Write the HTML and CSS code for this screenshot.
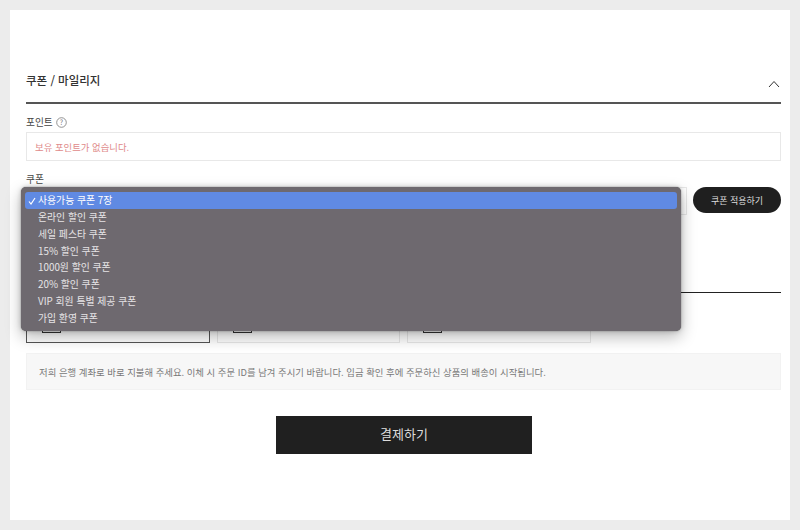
FILE: index.html
```html
<!DOCTYPE html>
<html lang="ko">
  <head>
    <meta charset="UTF-8" />
    <meta name="viewport" content="width=device-width, initial-scale=1.0" />
    <title>결제하기</title>
    <link rel="stylesheet" href="styles.css">
  </head>
  <body>
    <main class="panel">
      <!-- 쿠폰 / 마일리지 -->
      <div class="section-head">
        <h2>쿠폰 / 마일리지</h2>
        <svg class="chevron" width="12" height="8" viewBox="0 0 12 8">
          <path d="M1 7 L6 1.5 L11 7" fill="none" stroke="#333" stroke-width="1" />
        </svg>
      </div>

      <div class="field-label point-label">
        포인트
        <svg width="11" height="11" viewBox="0 0 11 11">
          <circle cx="5.5" cy="5.5" r="4.8" fill="none" stroke="#777" stroke-width="0.8" />
          <text x="5.5" y="8" text-anchor="middle" font-size="7" fill="#777">?</text>
        </svg>
      </div>
      <div class="point-box">보유 포인트가 없습니다.</div>

      <div class="field-label coupon-label">쿠폰</div>
      <div class="coupon-row">
        <div class="coupon-select"></div>
        <button class="coupon-btn">쿠폰 적용하기</button>
      </div>

      <!-- 결제 수단 -->
      <div class="pay-rule"></div>
      <div class="pay-methods">
        <div class="pay-card pay-card-on"><span class="pay-icon"></span></div>
        <div class="pay-card"><span class="pay-icon"></span></div>
        <div class="pay-card pay-card-last"><span class="pay-icon"></span></div>
      </div>
      <div class="pay-info">저희 은행 계좌로 바로 지불해 주세요. 이체 시 주문 ID를 남겨 주시기 바랍니다. 입금 확인 후에 주문하신 상품의 배송이 시작됩니다.</div>
      <button class="pay-btn">결제하기</button>

      <!-- 열린 쿠폰 목록 -->
      <ul class="coupon-menu">
        <li class="selected">
          <svg class="check" width="8" height="8" viewBox="0 0 8 8">
            <path d="M1 4.5 L3 7 L7 1" fill="none" stroke="#fff" stroke-width="1.2" />
          </svg>
          사용가능 쿠폰 7장
        </li>
        <li>온라인 할인 쿠폰</li>
        <li>세일 페스타 쿠폰</li>
        <li>15% 할인 쿠폰</li>
        <li>1000원 할인 쿠폰</li>
        <li>20% 할인 쿠폰</li>
        <li>VIP 회원 특별 제공 쿠폰</li>
        <li>가입 환영 쿠폰</li>
      </ul>
    </main>
  </body>
</html>
```

FILE: styles.css
```css
* {
  box-sizing: border-box;
}
body {
  margin: 0;
  padding: 10px;
  height: 530px;
  overflow: hidden;
  background-color: #ececec;
  font-family: "Noto Sans CJK KR", "Liberation Sans", sans-serif;
  color: #222;
}
.panel {
  position: relative;
  height: 510px;
  padding: 0 9px 0 16px;
  background-color: #fff;
}
.section-head {
  display: flex;
  justify-content: space-between;
  align-items: center;
  height: 94px;
  padding-top: 58px;
  padding-bottom: 10px;
  border-bottom: 2px solid #555;
}
.section-head h2 {
  margin: 0;
  font-size: 11.5px;
  font-weight: 500;
  color: #333;
}
.chevron {
  margin-top: 8px;
  margin-right: 1px;
}
.field-label {
  font-size: 9.7px;
  line-height: 14px;
  color: #444;
}
.point-label {
  display: flex;
  align-items: center;
  gap: 3px;
  margin-top: 11px;
}
.point-box {
  display: flex;
  align-items: center;
  height: 29px;
  margin-top: 3px;
  padding-left: 8px;
  border: 1px solid #e8e8e8;
  font-size: 9.4px;
  color: #e08a8a;
}
.coupon-label {
  margin-top: 11px;
  margin-bottom: 1px;
}
.coupon-row {
  display: flex;
  justify-content: space-between;
  align-items: center;
  height: 28px;
}
.coupon-select {
  width: 661px;
  height: 28px;
  border: 1px solid #e8e8e8;
}
.coupon-btn {
  width: 88px;
  height: 26px;
  margin-bottom: 2px;
  padding: 0;
  border: none;
  border-radius: 13px;
  background-color: #1f1f1f;
  color: #ddd;
  font-family: inherit;
  font-size: 9px;
}
.pay-rule {
  height: 1px;
  margin-top: 77px;
  background-color: #222;
}
.pay-methods {
  display: flex;
  gap: 7px;
  margin-top: 9px;
}
.pay-card {
  display: flex;
  width: 183px;
  height: 41px;
  padding-left: 15px;
  border: 1px solid #e8e8e8;
}
.pay-card-on {
  width: 184px;
  border-color: #555;
}
.pay-card-last {
  width: 184px;
}
.pay-icon {
  width: 19px;
  height: 30px;
  border: 1px solid #333;
}
.pay-info {
  display: flex;
  align-items: center;
  height: 37px;
  margin-top: 10px;
  padding-left: 12px;
  border: 1px solid #f2f2f2;
  background-color: #f7f7f7;
  font-size: 9.39px;
  color: #777;
}
.pay-btn {
  display: block;
  width: 256px;
  height: 38px;
  margin: 26px 0 0 250px;
  padding: 0 0 4px;
  border: none;
  background-color: #202020;
  color: #ddd;
  font-family: inherit;
  font-size: 13px;
}
.coupon-menu {
  position: absolute;
  top: 177px;
  left: 11px;
  width: 660px;
  height: 144px;
  margin: 0;
  padding: 5px 4px 0;
  list-style: none;
  border-radius: 5px;
  background-color: #6e696f;
  box-shadow: 0 0 1px #444, 0 0 5px rgba(0, 0, 0, 0.2), 0 6px 16px rgba(0, 0, 0, 0.28);
  font-size: 9.85px;
  color: #e6e4e6;
}
.coupon-menu li {
  position: relative;
  height: 16.85px;
  padding-left: 13px;
  line-height: 17px;
}
.coupon-menu .selected {
  border-radius: 3px;
  background-color: #608ae3;
  color: #fff;
}
.check {
  position: absolute;
  left: 3px;
  top: 5px;
}
```
